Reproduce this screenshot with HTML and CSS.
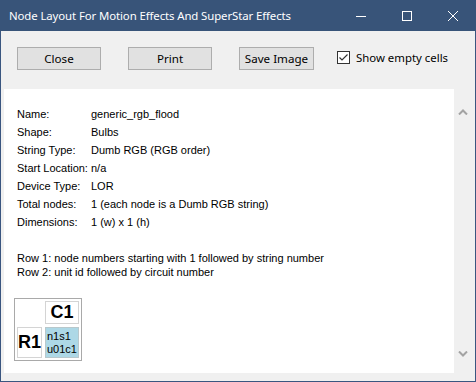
FILE: index.html
```html
<!DOCTYPE html>
<html>
<head>
<meta charset="utf-8">
<link rel="stylesheet" href="styles.css">
</head>
<body>
<div class="window">
  <div class="titlebar">
    <span class="title">Node Layout For Motion Effects And SuperStar Effects</span>
    <div class="controls">
      <span class="ctl"><svg width="10" height="10" viewBox="0 0 10 10"><path d="M0 5.5H10" stroke="#fff" stroke-width="1"/></svg></span>
      <span class="ctl"><svg width="10" height="10" viewBox="0 0 10 10"><rect x="0.5" y="0.5" width="9" height="9" fill="none" stroke="#fff" stroke-width="1"/></svg></span>
      <span class="ctl"><svg width="10" height="10" viewBox="0 0 10 10"><path d="M0 0L10 10M10 0L0 10" stroke="#fff" stroke-width="1"/></svg></span>
    </div>
  </div>
  <div class="toolbar">
    <button class="btn btn-wide">Close</button>
    <button class="btn btn-wide">Print</button>
    <button class="btn btn-save">Save Image</button>
    <label class="check">
      <span class="box"><svg width="11" height="11" viewBox="0 0 11 11"><path d="M1.5 5.5L4 8L9.5 2.5" fill="none" stroke="#333" stroke-width="1.2"/></svg></span>
      <span>Show empty cells</span>
    </label>
  </div>
  <div class="panel">
    <div class="content">
      <div class="info">
        <div class="row"><span class="lbl">Name:</span><span>generic_rgb_flood</span></div>
        <div class="row"><span class="lbl">Shape:</span><span>Bulbs</span></div>
        <div class="row"><span class="lbl">String Type:</span><span>Dumb RGB (RGB order)</span></div>
        <div class="row"><span class="lbl">Start Location:</span><span>n/a</span></div>
        <div class="row"><span class="lbl">Device Type:</span><span>LOR</span></div>
        <div class="row"><span class="lbl">Total nodes:</span><span>1 (each node is a Dumb RGB string)</span></div>
        <div class="row"><span class="lbl">Dimensions:</span><span>1 (w) x 1 (h)</span></div>
      </div>
      <div class="legend">
        <div>Row 1: node numbers starting with 1 followed by string number</div>
        <div>Row 2: unit id followed by circuit number</div>
      </div>
      <div class="grid">
        <div class="cell empty"></div>
        <div class="cell head">C1</div>
        <div class="cell head">R1</div>
        <div class="cell node">n1s1<br>u01c1</div>
      </div>
    </div>
    <div class="scrollbar">
      <svg width="10" height="6" viewBox="0 0 10 6"><path d="M1 5.5L5 1.5L9 5.5" fill="none" stroke="#a3a3a3" stroke-width="2"/></svg>
      <svg width="10" height="6" viewBox="0 0 10 6"><path d="M1 0.5L5 4.5L9 0.5" fill="none" stroke="#a3a3a3" stroke-width="2"/></svg>
    </div>
  </div>
</div>
</body>
</html>
```

FILE: styles.css
```css
* { box-sizing: border-box; }
html, body { margin: 0; padding: 0; }
body { width: 476px; height: 382px; overflow: hidden; background: #f0f0f0; }

.window {
  width: 476px;
  height: 382px;
  display: flex;
  flex-direction: column;
  border: 1px solid #3a5680;
  border-top: none;
  background: #f0f0f0;
}

.titlebar {
  height: 31px;
  flex: none;
  background: #385479;
  margin: 0 -1px;
  display: flex;
  align-items: center;
  justify-content: space-between;
  padding-left: 9px;
}
.title {
  color: #fff;
  font-family: "Noto Sans", "Open Sans", sans-serif;
  font-size: 11.4px;
  letter-spacing: -0.1px;
}
.controls { display: flex; height: 31px; }
.ctl {
  width: 46px;
  height: 31px;
  display: flex;
  align-items: center;
  justify-content: center;
}

.toolbar {
  height: 57px;
  flex: none;
  display: flex;
  align-items: flex-start;
  padding: 16px 0 0 16px;
  font-family: "Noto Sans", "Open Sans", sans-serif;
  font-size: 11.4px;
  color: #000;
}
.btn {
  height: 23px;
  background: #e1e1e1;
  border: 1px solid #adadad;
  font-family: inherit;
  font-size: 11.6px;
  color: #000;
  padding: 0;
  margin-right: 27px;
}
.btn-wide { width: 84px; }
.btn-save { width: 75px; margin-right: 23px; }

.check {
  display: flex;
  align-items: center;
  height: 22px;
  gap: 6px;
  margin-top: -1px;
}
.box {
  width: 13px;
  height: 13px;
  border: 1px solid #333;
  background: #fff;
  display: flex;
  align-items: center;
  justify-content: center;
}

.panel {
  flex: 1;
  margin: 1px 3px 8px 3px;
  display: flex;
  background: #fff;
}
.content {
  flex: 1;
  padding: 16px 0 0 13px;
  font-family: "Liberation Sans", Arial, sans-serif;
  font-size: 11px;
  color: #000;
}
.row { display: flex; height: 18px; align-items: center; }
.lbl { width: 74px; flex: none; }

.legend { margin-top: 20px; line-height: 14px; }

.grid {
  margin-top: 19px;
  margin-left: -3px;
  display: inline-grid;
  grid-template-columns: 25px 34px;
  grid-template-rows: 23px 31px;
  gap: 3px;
  padding: 2px;
  border: 1px solid #a9a9a9;
}
.cell { border: 1px solid #d4d4d4; }
.cell.empty { border-color: transparent; }
.head {
  font-family: "Liberation Sans", Arial, sans-serif;
  font-weight: bold;
  font-size: 18px;
  display: flex;
  align-items: center;
  justify-content: center;
}
.node {
  background: #add8e6;
  border-color: #b8c8cc;
  font-size: 11px;
  line-height: 13px;
  padding: 2px 0 0 1px;
}

.scrollbar {
  width: 18px;
  flex: none;
  background: #f0f0f0;
  display: flex;
  flex-direction: column;
  justify-content: space-between;
  align-items: center;
  padding: 20px 0 16px 0;
}
```
